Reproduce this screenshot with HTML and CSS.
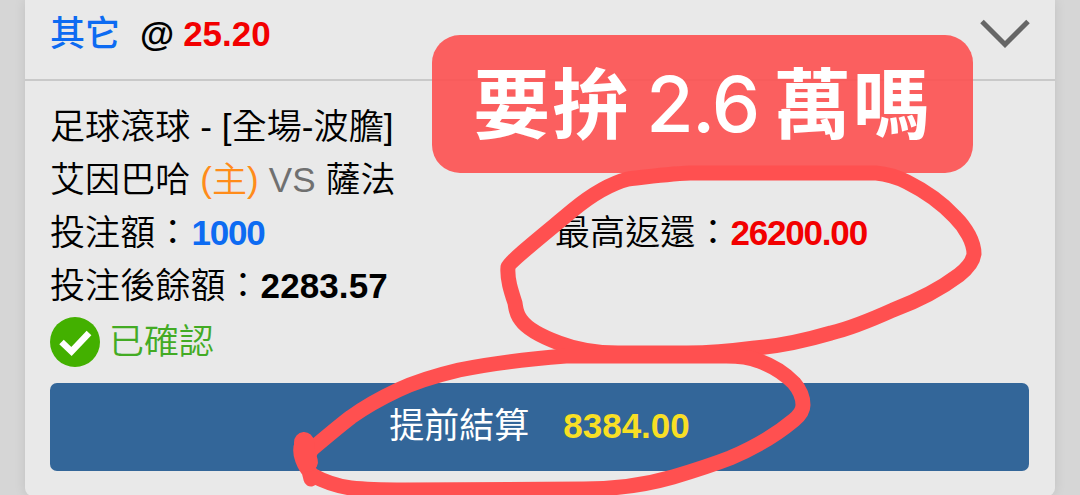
FILE: index.html
```
<!DOCTYPE html>
<html lang="zh-Hant">
<head>
    <meta charset="UTF-8">
    <meta name="viewport" content="width=device-width, initial-scale=1.0">
    <title>投注記錄</title>
    <link rel="stylesheet" href="styles.css">
</head>
<body>

<div class="card">
    <div class="card-header">
        <div class="odds">
            <span class="blue type">其它</span>
            <span class="at">@</span>
            <span class="red">25.20</span>
        </div>
        <svg class="arrow" width="50" height="30" viewBox="0 0 50 30">
            <path d="M2 2.5 L25 25.5 L48 2.5" fill="none" stroke="#666" stroke-width="5"/>
        </svg>
    </div>

    <div class="card-body">
        <div class="row">足球滾球 - [全場-波膽]</div>
        <div class="row">艾因巴哈 <span class="home">(主)</span> <span class="vs">VS</span> 薩法</div>
        <div class="row two-cols">
            <div>投注額：<span class="blue narrow">1000</span></div>
            <div>最高返還：<span class="red narrow">26200.00</span></div>
        </div>
        <div class="row">投注後餘額：<b>2283.57</b></div>
        <div class="status">
            <svg width="50" height="50" viewBox="0 0 50 50">
                <circle cx="25" cy="25" r="25" fill="#43b000"/>
                <path d="M11.5 25 L21.5 34.5 L39 16" fill="none" stroke="#fff" stroke-width="6.5"/>
            </svg>
            <span>已確認</span>
        </div>
        <button class="cashout">
            <span>提前結算</span>
            <span class="amount">8384.00</span>
        </button>
    </div>
</div>

<div class="callout">
    <span>要拚</span>
    <span class="num">2.6</span>
    <span>萬嗎</span>
</div>

<!-- trazos a mano -->
<svg class="marks" width="1080" height="495" viewBox="0 0 1080 495">
    <path d="M508 267 C510 261 548 231 573 210 C590 196 609 184 628 179 C645 177 667 174 690 173 L876 173 C888 174 897 177 907 182 C925 191 942 203 955 217 C966 228 974 242 974 254 C973 261 968 268 959 275 C939 290 917 301 893 310 C873 319 852 328 831 333 C807 340 781 346 755 348 C732 351 710 353 687 353 L618 353 C597 353 577 350 559 343 C543 337 528 330 521 320 C516 314 516 309 515 303 C511 291 507 279 508 267 Z"/>
    <path d="M302 444 C298 453 304 466 312 475 C323 481 336 486 351 488 C369 490 387 490 405 490 L584 489 C615 489 645 485 673 477 C693 471 712 465 730 458 C754 448 776 435 794 420 C800 415 803 410 803 405 C803 397 800 390 794 383 C785 374 773 366 759 361 C749 357 738 356 726 356 L566 356 C528 359 493 363 459 370 C438 375 417 381 398 390 C381 398 365 407 351 417 C338 427 325 438 312 449 C308 454 307 461 308 467 L311 479"/>
    <path class="dot" d="M304 442 L304.5 450 L308 462"/>
</svg>

</body>
</html>
```
FILE: styles.css
```
* {
    box-sizing: border-box;
}
body {
    margin: 0;
    height: 495px;
    overflow: hidden;
    position: relative;
    background-color: #d6d6d6;
    color: #000;
    font-family: 'Liberation Sans', 'Noto Sans CJK TC', sans-serif;
    font-size: 35px;
}
.card {
    width: 1030px;
    height: 496px;
    margin-left: 25px;
    background-color: #e9e9e9;
    border-radius: 0 0 8px 8px;
    box-shadow: 0 0 12px rgba(0,0,0,0.1);
}
.card-header {
    height: 81px;
    padding: 0 25px 11px;
    display: flex;
    justify-content: space-between;
    align-items: center;
    border-bottom: 2px solid #c9c9c9;
}
.odds {
    display: flex;
    align-items: center;
    gap: 9px;
    line-height: 50px;
}
.type {
    margin-right: 11px;
    font-weight: 500;
}
.at {
    font-weight: bold;
}
.blue {
    color: #0d6bf2;
}
.red {
    color: #f20000;
    font-weight: bold;
}
.card-body {
    padding: 19px 26px 0 25px;
}
.row {
    height: 53px;
    line-height: 53px;
    white-space: nowrap;
    font-weight: 350;
    letter-spacing: 0.1px;
}
.row b {
    font-weight: bold;
}
.two-cols {
    display: grid;
    grid-template-columns: 505px 1fr;
}
.row .blue {
    margin-left: 1px;
    font-weight: bold;
}
.narrow {
    letter-spacing: -1.2px;
}
.home {
    color: #ff8c1a;
}
.vs {
    color: #707070;
}
.status {
    height: 50px;
    margin-top: 5px;
    display: flex;
    align-items: center;
    gap: 9px;
    line-height: 50px;
    color: #43ab24;
    font-weight: 350;
}
.cashout {
    width: 979px;
    height: 88px;
    margin-top: 16px;
    display: flex;
    justify-content: center;
    align-items: baseline;
    gap: 34px;
    padding: 0;
    border: none;
    border-radius: 7px;
    background-color: #336699;
    color: #fff;
    font: inherit;
    line-height: 86px;
}
.amount {
    color: #f8df25;
    font-weight: bold;
}
.callout {
    position: absolute;
    left: 432px;
    top: 35px;
    width: 541px;
    height: 138px;
    padding-bottom: 8px;
    display: flex;
    justify-content: center;
    align-items: center;
    gap: 15px;
    border-radius: 28px;
    background-color: rgba(252,84,84,0.93);
    color: #fff;
    font-family: 'Noto Sans CJK TC', sans-serif;
    font-size: 77px;
    font-weight: bold;
    letter-spacing: 2px;
    line-height: 130px;
}
.num {
    padding-top: 8px;
    font-family: Inter, sans-serif;
    font-weight: 500;
    letter-spacing: -1.5px;
}
.marks {
    position: absolute;
    left: 0;
    top: 0;
    fill: none;
    stroke: #ff5050;
    stroke-width: 15;
    stroke-linecap: round;
    stroke-linejoin: round;
}
.dot {
    stroke-width: 20;
}
```
